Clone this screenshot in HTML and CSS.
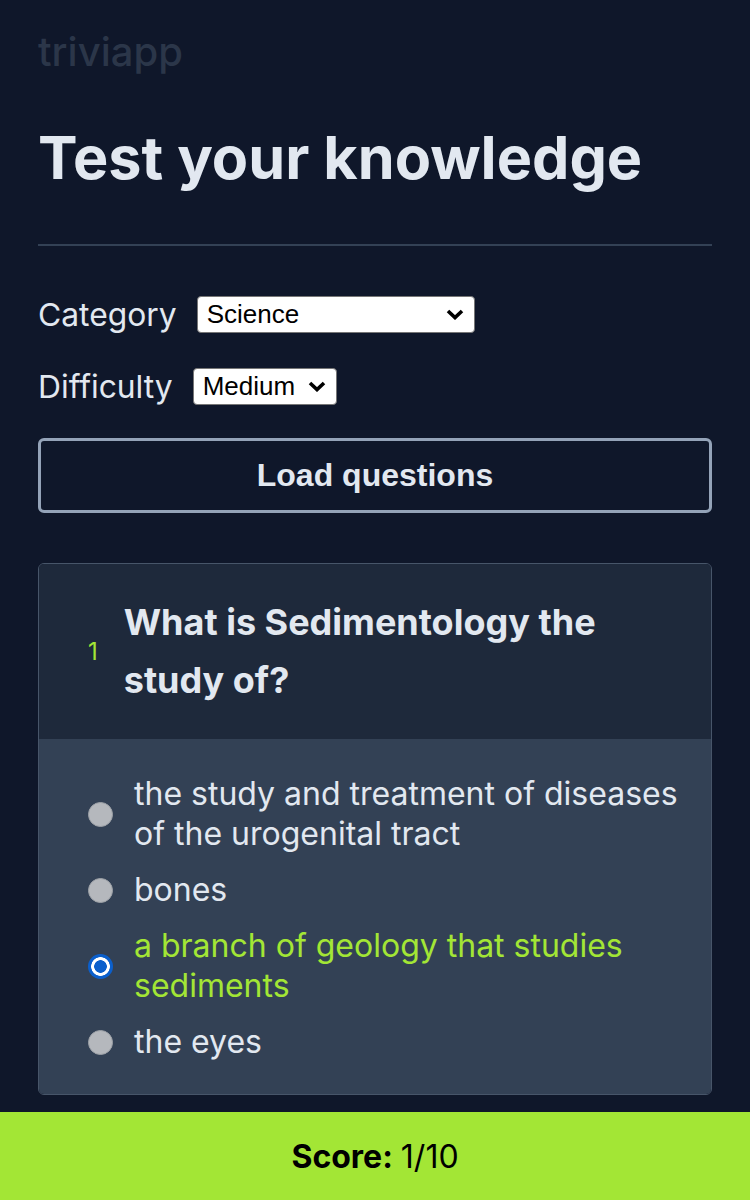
FILE: index.html
```html
<!DOCTYPE html>
<html lang="en">
<head>
<meta charset="utf-8">
<title>triviapp</title>
<link rel="stylesheet" href="styles.css">
</head>
<body>
<main class="page">
  <div class="logo">triviapp</div>
  <h1 class="title">Test your knowledge</h1>
  <hr class="divider">
  <form class="filters">
    <label class="field">
      <span class="field-label">Category</span>
      <select class="select select-category">
        <option>Science</option>
      </select>
    </label>
    <label class="field">
      <span class="field-label">Difficulty</span>
      <select class="select select-difficulty">
        <option>Medium</option>
      </select>
    </label>
    <button type="button" class="load-btn">Load questions</button>
  </form>

  <section class="card">
    <div class="card-head">
      <span class="q-num">1</span>
      <h2 class="q-text">What is Sedimentology the study of?</h2>
    </div>
    <ul class="answers">
      <li class="answer"><span class="radio"></span><span class="answer-text">the study and treatment of diseases of the urogenital tract</span></li>
      <li class="answer"><span class="radio"></span><span class="answer-text">bones</span></li>
      <li class="answer correct"><span class="radio checked"></span><span class="answer-text">a branch of geology that studies sediments</span></li>
      <li class="answer"><span class="radio"></span><span class="answer-text">the eyes</span></li>
    </ul>
  </section>
</main>
<footer class="score-bar"><strong>Score:</strong> 1/10</footer>
</body>
</html>
```
FILE: styles.css
```css
* { box-sizing: border-box; }
html, body { margin: 0; padding: 0; }
body {
  background: #0f172a;
  color: #e2e8f0;
  font-family: Inter, "Noto Sans", sans-serif;
  min-height: 1200px;
}
.page {
  padding: 26px 38px 120px;
}
.logo {
  font-size: 40px;
  line-height: 52px;
  color: #2b3649;
  font-weight: 500;
}
.title {
  margin: 44px 0 0;
  font-size: 59.3px;
  line-height: 72px;
  font-weight: 700;
}
.divider {
  margin: 50px 0 0;
  border: 0;
  height: 2px;
  background: #334155;
}
.filters {
  display: flex;
  flex-direction: column;
  margin-top: 48px;
}
.field {
  display: flex;
  align-items: center;
  gap: 20px;
  height: 40px;
  margin-bottom: 32px;
}
.field-label {
  font-size: 31.8px;
}
.select {
  appearance: none;
  -webkit-appearance: none;
  font-family: "Liberation Sans", Arial, sans-serif;
  font-size: 26px;
  height: 37px;
  padding: 0 40px 0 9px;
  background-color: #fff;
  background-image: url("data:image/svg+xml,%3Csvg xmlns='http://www.w3.org/2000/svg' viewBox='0 0 18 11'%3E%3Cpath d='M2 2 L9 8.6 L16 2' fill='none' stroke='%23000' stroke-width='3.6'/%3E%3C/svg%3E");
  background-repeat: no-repeat;
  background-position: right 10px center;
  background-size: 18px 11px;
  color: #000;
  border: 1px solid #767676;
  border-radius: 4px;
}
.select-category { width: 278px; }
.select-difficulty { width: 144px; }
.load-btn {
  height: 75px;
  width: 100%;
  background: transparent;
  border: 3px solid #94a3b8;
  border-radius: 6px;
  color: #e2e8f0;
  font-family: "Liberation Sans", Arial, sans-serif;
  font-weight: 700;
  font-size: 32px;
}
.card {
  margin-top: 50px;
  border: 1px solid #475569;
  border-radius: 6px;
  overflow: hidden;
}
.card-head {
  display: flex;
  align-items: center;
  gap: 26px;
  padding: 30px 30px 30px 49px;
  background: #1e293b;
}
.q-num {
  color: #a3e635;
  font-size: 24px;
  width: 10px;
}
.q-text {
  margin: 0;
  font-size: 36px;
  line-height: 57.5px;
  font-weight: 700;
}
.answers {
  list-style: none;
  margin: 0;
  padding: 35px 20px 32px 49px;
  background: #334155;
  display: flex;
  flex-direction: column;
  gap: 16px;
}
.answer {
  display: flex;
  align-items: center;
  gap: 21px;
  font-size: 32px;
  line-height: 40px;
}
.answer.correct { color: #a3e635; }
.radio {
  flex: none;
  width: 25px;
  height: 25px;
  border-radius: 50%;
  background: #b5b8bd;
  border: 1px solid #9da1a7;
}
.radio.checked {
  border: none;
  background: radial-gradient(circle, #0b5fcc 0 6px, #fff 6.6px 9px, #0b5fcc 9.6px);
}
.score-bar {
  position: fixed;
  left: 0;
  right: 0;
  bottom: 0;
  height: 88px;
  background: #a3e635;
  color: #000;
  display: flex;
  align-items: center;
  justify-content: center;
  gap: 0.25em;
  font-size: 32px;
}
.score-bar strong { font-weight: 700; }
```
